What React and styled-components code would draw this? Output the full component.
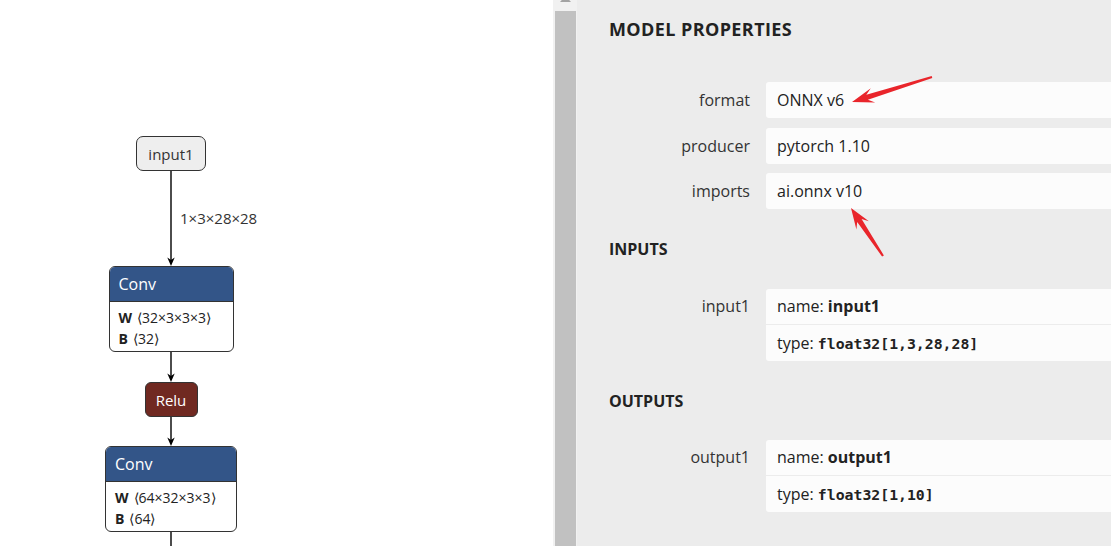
import styled, { createGlobalStyle } from "styled-components";

const GlobalStyle = createGlobalStyle`
  html, body {
    margin: 0;
    padding: 0;
  }
  body {
    font-family: "Open Sans", "Noto Sans", sans-serif;
    overflow: hidden;
  }
`;

const Page = styled.div`
  position: relative;
  display: flex;
  width: 1111px;
  height: 546px;
  overflow: hidden;
`;

/* graph canvas */

const Canvas = styled.div`
  flex: none;
  width: 553px;
  background: #fff;
  overflow: hidden;
`;

const Column = styled.div`
  width: 342px;
  padding-top: 136px;
  display: flex;
  flex-direction: column;
  align-items: center;
`;

const InputNode = styled.div`
  box-sizing: border-box;
  width: 70px;
  height: 35px;
  border: 1px solid #333;
  border-radius: 7px;
  background: #eee;
  color: #333;
  font-size: 15px;
  display: flex;
  align-items: center;
  justify-content: center;
`;

const OpNode = styled.div`
  box-sizing: border-box;
  width: ${(p) => p.$w}px;
  border: 1px solid #333;
  border-radius: 6px;
  overflow: hidden;
  background: #fff;
`;

const OpHeader = styled.div`
  height: 34px;
  line-height: 34px;
  padding-left: 9px;
  background: #335588;
  color: #fff;
  font-size: 16px;
  border-bottom: 1px solid #333;
`;

const OpBody = styled.div`
  padding: 5px 0 2px 9px;
`;

const Arg = styled.div`
  font-size: 14px;
  line-height: 21px;
  color: #222;
  white-space: nowrap;

  b {
    font-weight: 700;
    margin-right: 5px;
  }
`;

const ActNode = styled.div`
  box-sizing: border-box;
  width: 53px;
  height: 35px;
  border: 1px solid #333;
  border-radius: 6px;
  background: #702921;
  color: #fff;
  font-size: 15px;
  display: flex;
  align-items: center;
  justify-content: center;
`;

const EdgeWrap = styled.div`
  position: relative;
  width: 16px;
  height: ${(p) => p.$h}px;

  svg {
    display: block;
  }
`;

const EdgeLabel = styled.span`
  position: absolute;
  left: 17px;
  top: ${(p) => p.$top}px;
  font-size: 15px;
  line-height: 18px;
  color: #333;
  white-space: nowrap;
`;

function Edge({ h, label, labelTop, arrow = true }) {
  return (
    <EdgeWrap $h={h}>
      <svg width="16" height={h}>
        <line x1="8" y1="0" x2="8" y2={arrow ? h - 4 : h} stroke="#000" strokeWidth="1.4" />
        {arrow && (
          <path d={`M4.3 ${h - 8.5} L8 ${h} L11.7 ${h - 8.5} L8 ${h - 6}Z`} fill="#000" />
        )}
      </svg>
      {label && <EdgeLabel $top={labelTop}>{label}</EdgeLabel>}
    </EdgeWrap>
  );
}

function Conv({ w, args }) {
  return (
    <OpNode $w={w}>
      <OpHeader>Conv</OpHeader>
      <OpBody>
        {args.map(([name, shape]) => (
          <Arg key={name}>
            <b>{name}</b>⟨{shape}⟩
          </Arg>
        ))}
      </OpBody>
    </OpNode>
  );
}

/* scrollbar */

const Scrollbar = styled.div`
  flex: none;
  box-sizing: border-box;
  width: 24px;
  padding: 0 1px 0 2px;
  background: #f1f1f1;
  display: flex;
  flex-direction: column;

  svg {
    display: block;
    flex: none;
  }
`;

const Thumb = styled.div`
  flex: 1;
  background: #c1c1c1;
`;

/* sidebar */

const Sidebar = styled.div`
  flex: 1;
  min-width: 0;
  padding: 17px 0 0 32px;
  background: #ececec;
  color: #222;
  overflow: hidden;
`;

const SectionTitle = styled.div`
  margin-top: ${(p) => p.$mt || 0}px;
  font-size: ${(p) => (p.$main ? 18 : 16)}px;
  font-weight: 700;
  line-height: 24px;
  letter-spacing: ${(p) => (p.$main ? 0.4 : 0)}px;
  color: #222;
`;

const Rows = styled.div`
  margin-top: ${(p) => p.$mt}px;
  display: flex;
  flex-direction: column;
  gap: 9.5px;
`;

const Row = styled.div`
  display: grid;
  grid-template-columns: 141px 1fr;
  column-gap: 16px;
`;

const Label = styled.div`
  text-align: right;
  font-size: 16px;
  line-height: ${(p) => p.$lh}px;
  color: #333;
`;

const ValueBox = styled.div`
  background: #fcfcfc;
  border-radius: 3px 0 0 3px;
`;

const ValueLine = styled.div`
  height: ${(p) => p.$h}px;
  line-height: ${(p) => p.$h}px;
  padding-left: 11px;
  font-size: 16px;
  color: #222;
  white-space: nowrap;

  & + & {
    border-top: 1px solid #ececec;
  }

  b {
    font-weight: 700;
  }
`;

const Mono = styled.code`
  font-family: "DejaVu Sans Mono", "Liberation Mono", monospace;
  font-size: 14.8px;
  font-weight: 700;
`;

/* annotation arrows drawn over the screenshot */

const Overlay = styled.svg`
  position: absolute;
  left: 0;
  top: 0;
  pointer-events: none;
`;

function arrowPoints([tx, ty], [hx, hy], headLen = 22, headW = 7.5, neckW = 2.6, tailW = 1.1) {
  const dx = hx - tx;
  const dy = hy - ty;
  const len = Math.hypot(dx, dy);
  const ux = dx / len;
  const uy = dy / len;
  const nx = -uy;
  const ny = ux;
  const wx = hx - ux * headLen;
  const wy = hy - uy * headLen;
  const kx = hx - ux * headLen * 0.72;
  const ky = hy - uy * headLen * 0.72;
  const pts = [
    [tx + nx * tailW, ty + ny * tailW],
    [kx + nx * neckW, ky + ny * neckW],
    [wx + nx * headW, wy + ny * headW],
    [hx, hy],
    [wx - nx * headW, wy - ny * headW],
    [kx - nx * neckW, ky - ny * neckW],
    [tx - nx * tailW, ty - ny * tailW],
  ];
  return pts.map((p) => p.map((v) => v.toFixed(1)).join(",")).join(" ");
}

const properties = [
  ["format", "ONNX v6"],
  ["producer", "pytorch 1.10"],
  ["imports", "ai.onnx v10"],
];

function Argument({ label, name, type }) {
  return (
    <Row>
      <Label $lh={35}>{label}</Label>
      <ValueBox>
        <ValueLine $h={35}>
          name: <b>{name}</b>
        </ValueLine>
        <ValueLine $h={36}>
          type: <Mono>{type}</Mono>
        </ValueLine>
      </ValueBox>
    </Row>
  );
}

export default function App() {
  return (
    <Page>
      <GlobalStyle />
      <Canvas>
        <Column>
          <InputNode>input1</InputNode>
          <Edge h={95} label="1×3×28×28" labelTop={38} />
          <Conv w={125} args={[["W", "32×3×3×3"], ["B", "32"]]} />
          <Edge h={30} />
          <ActNode>Relu</ActNode>
          <Edge h={29} />
          <Conv w={132} args={[["W", "64×32×3×3"], ["B", "64"]]} />
          <Edge h={30} arrow={false} />
        </Column>
      </Canvas>
      <Scrollbar>
        <svg width="21" height="11">
          <polygon points="5,2 16,2 10.5,-4" fill="#a3a3a3" />
        </svg>
        <Thumb />
      </Scrollbar>
      <Sidebar>
        <SectionTitle $main>MODEL PROPERTIES</SectionTitle>
        <Rows $mt={41}>
          {properties.map(([k, v]) => (
            <Row key={k}>
              <Label $lh={36}>{k}</Label>
              <ValueBox>
                <ValueLine $h={36}>{v}</ValueLine>
              </ValueBox>
            </Row>
          ))}
        </Rows>
        <SectionTitle $mt={28}>INPUTS</SectionTitle>
        <Rows $mt={28}>
          <Argument label="input1" name="input1" type="float32[1,3,28,28]" />
        </Rows>
        <SectionTitle $mt={28}>OUTPUTS</SectionTitle>
        <Rows $mt={27}>
          <Argument label="output1" name="output1" type="float32[1,10]" />
        </Rows>
      </Sidebar>
      <Overlay width="1111" height="546">
        <polygon points={arrowPoints([932, 77], [852, 102])} fill="#e9252b" />
        <polygon points={arrowPoints([883, 256], [851, 208], 21)} fill="#e9252b" />
      </Overlay>
    </Page>
  );
}
